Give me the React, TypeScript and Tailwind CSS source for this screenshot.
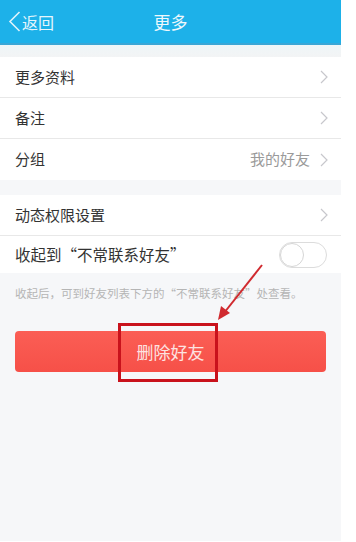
import React from 'react';

const font = { fontFamily: '"Noto Sans CJK SC", "Noto Sans", sans-serif' };

function Chevron() {
    return (
        <svg width="8" height="14" viewBox="0 0 8 14" className="ml-[10px]">
            <path d="M1 1l6 6-6 6" fill="none" stroke="#c7c7cc" strokeWidth="1.2" />
        </svg>
    );
}

function Row({ label, value, last }: { label: string; value?: string; last?: boolean }) {
    return (
        <div
            className={`flex h-[41px] items-center bg-white pl-[15px] pr-[13px] ${last ? '' : 'border-b border-[#e8e8e8]'}`}
        >
            <span className="flex-1 text-[15px] text-[#333]">{label}</span>
            {value && <span className="text-[15px] text-[#9a9a9a]">{value}</span>}
            <Chevron />
        </div>
    );
}

export default function App() {
    return (
        <div className="h-[542px] w-[356px] bg-white" style={font}>
            <div className="relative flex h-[541px] w-[341px] flex-col bg-[#f6f7f9]">
                {/* Header */}
                <div className="relative flex h-[45px] items-center border-b-2 border-[#39a6d6] bg-[#1db1e9] text-white">
                    <div className="flex items-center pl-[8px]">
                        <svg width="13" height="21" viewBox="0 0 13 21">
                            <path d="M11.5 1L2 10.5l9.5 9.5" fill="none" stroke="#dff3fb" strokeWidth="1.6" />
                        </svg>
                        <span className="ml-[1px] text-[16px] text-[#e6f6fc]">返回</span>
                    </div>
                    <span className="absolute left-0 right-0 text-center text-[17px] text-[#eef8fc] pointer-events-none">
                        更多
                    </span>
                </div>

                <div className="h-[12px] bg-gradient-to-b from-[#eef6f8] to-[#f3f4f5]" />

                <Row label="更多资料" />
                <Row label="备注" />
                <Row label="分组" value="我的好友" last />

                <div className="h-[15px]" />

                <Row label="动态权限设置" />
                <div className="flex h-[37px] items-center bg-white pl-[15px] pr-[14px]">
                    <span className="flex-1 text-[15.5px] text-[#333]">收起到“不常联系好友”</span>
                    <div className="flex h-[26px] w-[48px] items-center rounded-full border border-[#dcdcdc] bg-white">
                        <div className="h-[24px] w-[24px] rounded-full border border-[#d6d6d6] bg-white" />
                    </div>
                </div>

                <p className="px-[15px] pt-[12px] text-[11.5px] text-[#b5b5b5]">
                    收起后，可到好友列表下方的“不常联系好友”处查看。
                </p>

                <button className="mx-[15px] mt-[29px] flex h-[41px] items-center justify-center rounded-[4px] bg-gradient-to-b from-[#fb5e55] to-[#f65048] text-[17px] text-[#fde3e1]">
                    删除好友
                </button>

                {/* annotation box */}
                <div className="absolute left-[118px] top-[323px] h-[59px] w-[100px] border-[3px] border-[#c9121c]" />
                {/* annotation arrow */}
                <svg className="absolute left-0 top-0" width="341" height="541" viewBox="0 0 341 541">
                    <line x1="262" y1="265" x2="224" y2="313" stroke="#d02a2f" strokeWidth="2" />
                    <path d="M218 320l3-14 9 7z" fill="#d02a2f" />
                </svg>
            </div>
        </div>
    );
}
